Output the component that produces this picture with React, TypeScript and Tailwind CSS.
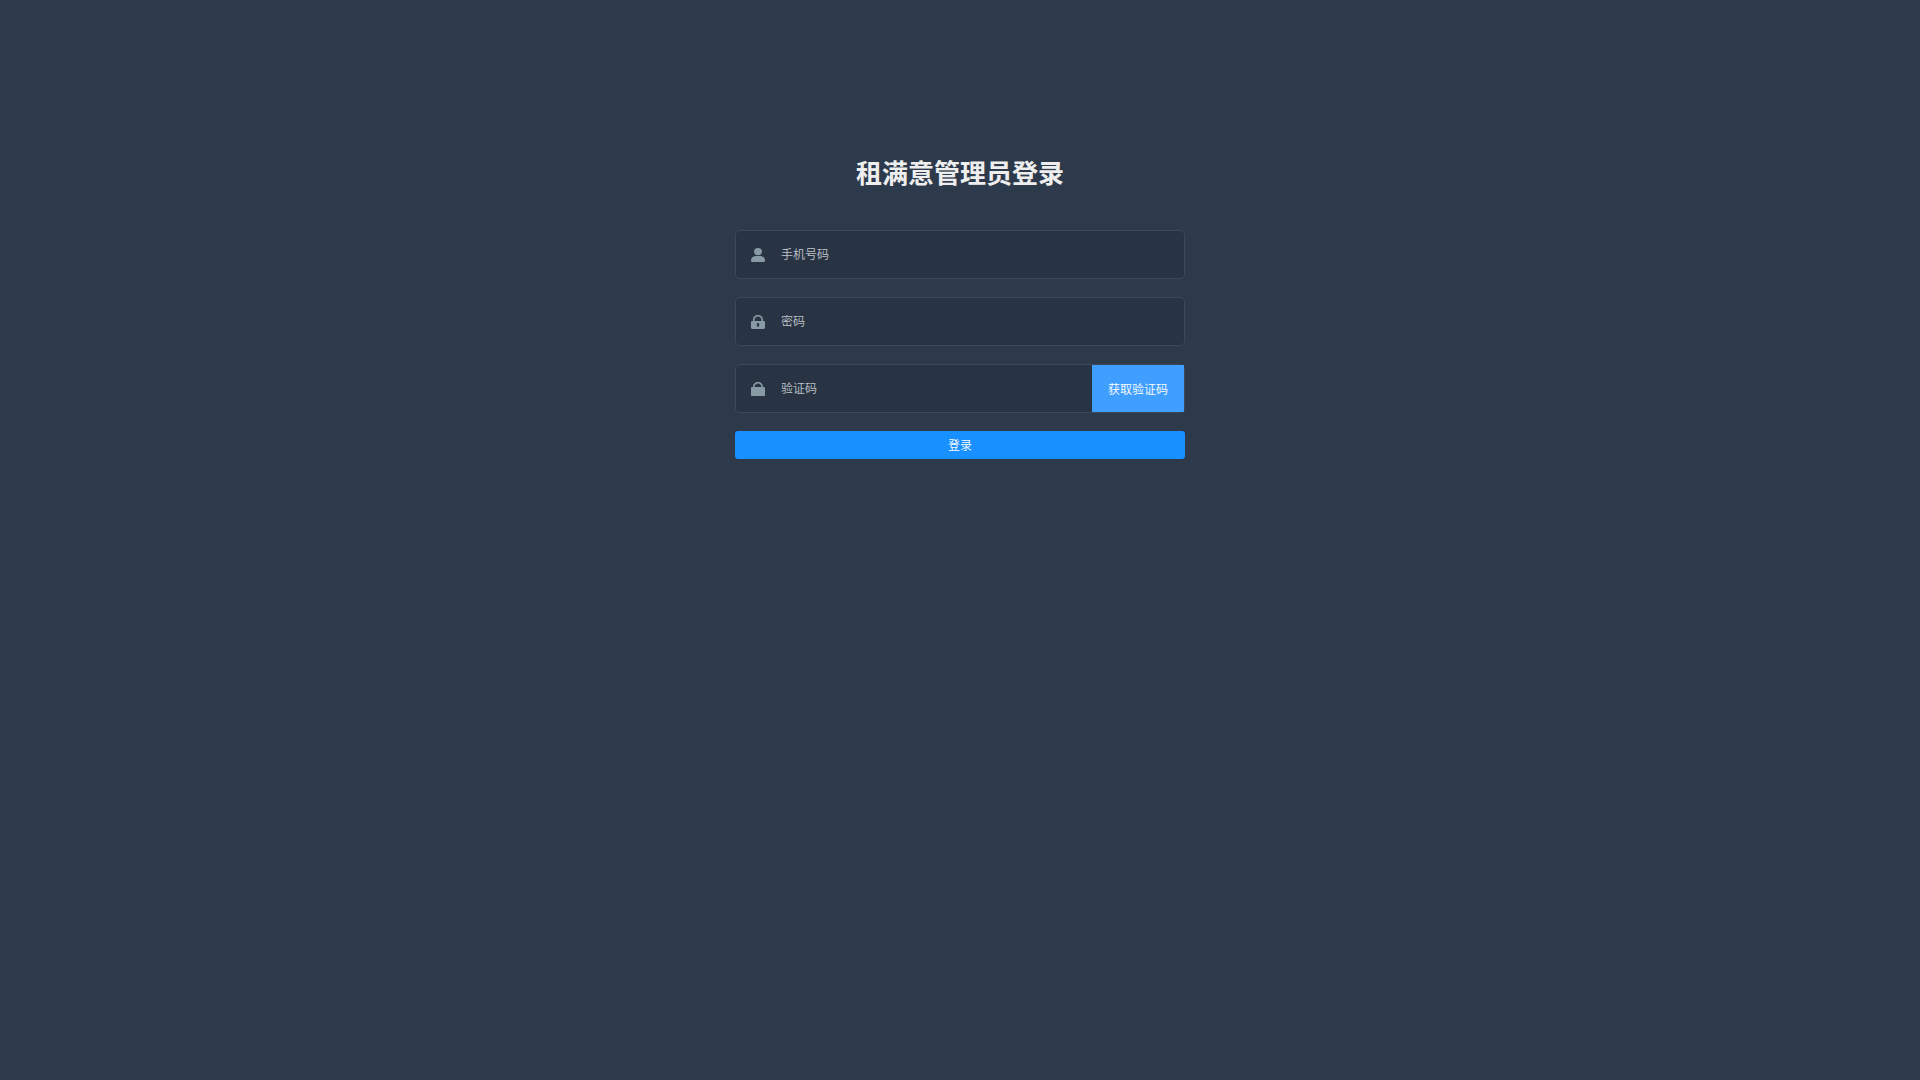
import { useState } from "react";
import type { FormEvent, ReactNode } from "react";

type FieldProps = {
  id: string;
  label: string;
  type?: string;
  value: string;
  onChange: (value: string) => void;
  icon: ReactNode;
  action?: ReactNode;
};

function UserIcon() {
  return (
    <svg viewBox="0 0 14 14" className="size-3.5" fill="currentColor" aria-hidden="true">
      <ellipse cx="7" cy="3.6" rx="4" ry="3.6" />
      <path d="M0 12.4C0 9.6 2.2 8 5 8h4c2.8 0 5 1.6 5 4.4 0 1-.5 1.6-1.4 1.6H1.4C.5 14 0 13.4 0 12.4z" />
    </svg>
  );
}

function PasswordIcon() {
  return (
    <svg viewBox="0 0 14 14" className="size-3.5" fill="currentColor" aria-hidden="true">
      <path
        fillRule="evenodd"
        d="M2 6V4.8C2 2 4.2 0 7 0s5 2 5 4.8V6h.8c.7 0 1.2.5 1.2 1.2v5.6c0 .7-.5 1.2-1.2 1.2H1.2C.5 14 0 13.5 0 12.8V7.2C0 6.5.5 6 1.2 6H2zm1.6 0h6.8V4.8C10.4 2.9 8.9 1.5 7 1.5S3.6 2.9 3.6 4.8V6zM7 8a1.4 1.4 0 0 0-.7 2.6V12h1.4v-1.4A1.4 1.4 0 0 0 7 8z"
      />
    </svg>
  );
}

function LockIcon() {
  return (
    <svg viewBox="0 0 14 14" className="size-3.5" fill="currentColor" aria-hidden="true">
      <path
        fillRule="evenodd"
        d="M2 5V4.8C2 2 4.2 0 7 0s5 2 5 4.8V5h1.2c.5 0 .8.3.8.8v7.4c0 .5-.3.8-.8.8H.8c-.5 0-.8-.3-.8-.8V5.8C0 5.3.3 5 .8 5H2zm1.500 0h7C10.4 2.9 8.9 1.5 7 1.5S3.600 2.9 3.500 5z"
      />
    </svg>
  );
}

function Field({ id, label, type = "text", value, onChange, icon, action }: FieldProps) {
  return (
    <div className="mb-[18px] flex h-[49px] items-stretch rounded-[5px] border border-white/10 bg-black/10">
      <label htmlFor={id} className="flex items-center pr-4 pl-[15px] text-[#889aa4]">
        {icon}
      </label>
      <input
        id={id}
        type={type}
        aria-label={label}
        value={value}
        onChange={(event) => onChange(event.target.value)}
        placeholder={label}
        className="min-w-0 flex-1 bg-transparent text-xs font-[350] text-white caret-white outline-none placeholder:text-[#c0c4cc]"
      />
      {action}
    </div>
  );
}

export default function LoginPage() {
  const [mobile, setMobile] = useState("");
  const [password, setPassword] = useState("");
  const [code, setCode] = useState("");

  const handleSubmit = (event: FormEvent) => {
    event.preventDefault();
  };

  return (
    <main className="min-h-screen overflow-hidden bg-[#2d3a4b] font-['Liberation_Sans','Noto_Sans_CJK_SC',sans-serif]">
      <form onSubmit={handleSubmit} className="mx-auto w-full max-w-[520px] px-[35px] pt-40">
        <h1 className="mb-[42px] text-center text-[26px] leading-7 font-bold text-[#eee]">租满意管理员登录</h1>
        <Field id="mobile" label="手机号码" value={mobile} onChange={setMobile} icon={<UserIcon />} />
        <Field id="password" label="密码" type="password" value={password} onChange={setPassword} icon={<PasswordIcon />} />
        <Field
          id="code"
          label="验证码"
          value={code}
          onChange={setCode}
          icon={<LockIcon />}
          action={
            <button type="button" className="shrink-0 bg-[#409eff] px-4 pt-0.5 text-xs font-[350] text-white">
              获取验证码
            </button>
          }
        />
        <button type="submit" className="h-7 w-full rounded-[3px] bg-[#1890ff] pt-0.5 text-xs font-[350] text-white">
          登录
        </button>
      </form>
    </main>
  );
}
